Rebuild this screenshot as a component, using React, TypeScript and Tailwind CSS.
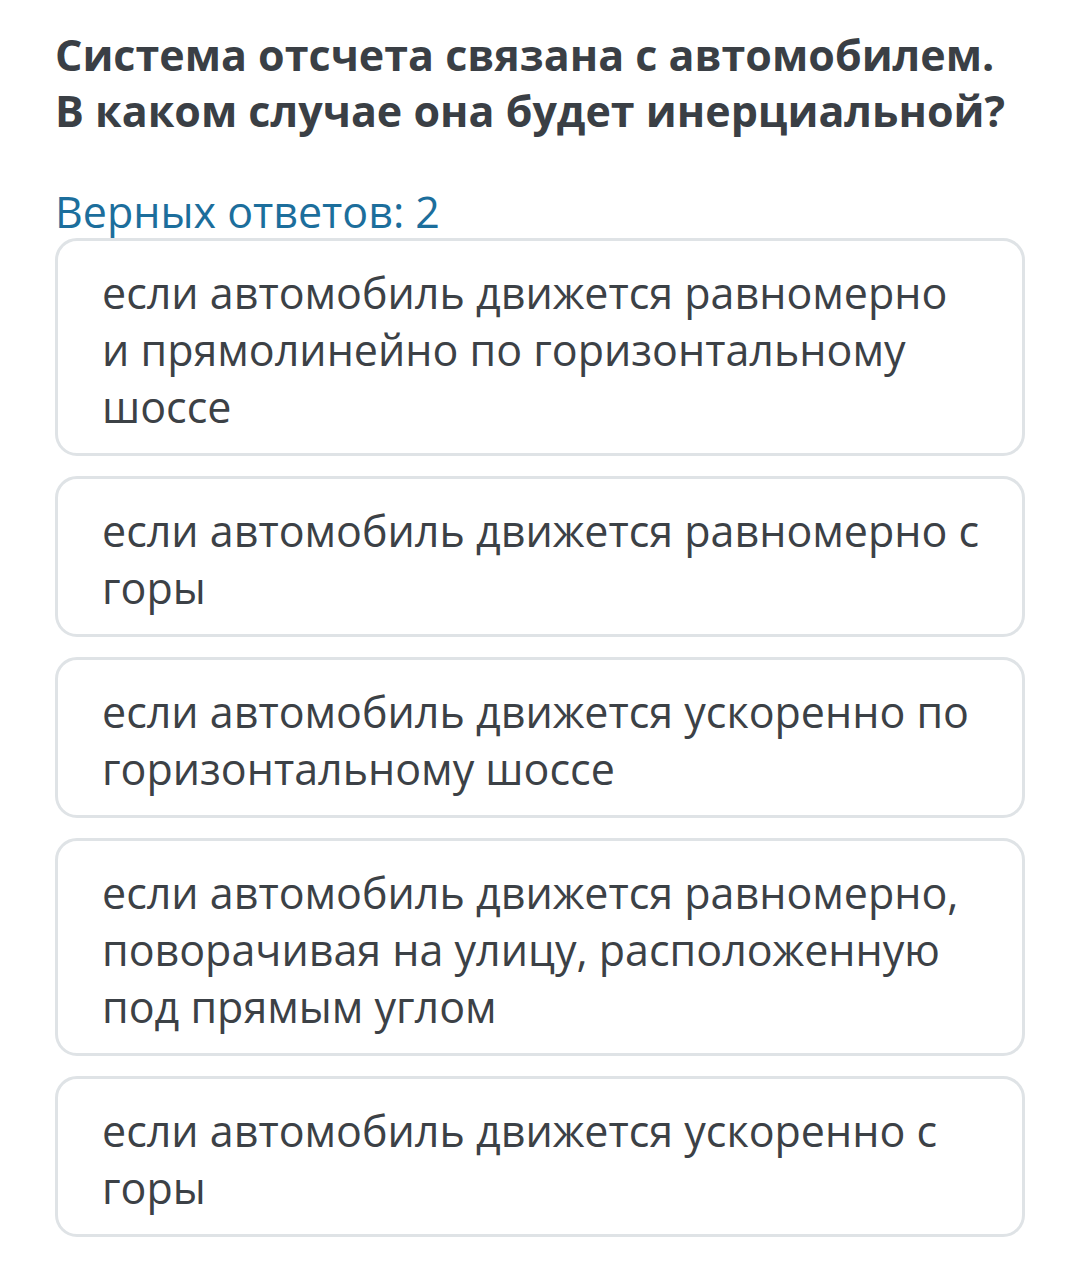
import React from "react";

const answers: string[][] = [
  [
    "если автомобиль движется равномерно",
    "и прямолинейно по горизонтальному",
    "шоссе",
  ],
  ["если автомобиль движется равномерно с", "горы"],
  ["если автомобиль движется ускоренно по", "горизонтальному шоссе"],
  [
    "если автомобиль движется равномерно,",
    "поворачивая на улицу, расположенную",
    "под прямым углом",
  ],
  ["если автомобиль движется ускоренно с", "горы"],
];

export default function App() {
  return (
    <div
      className="w-[1080px] min-h-[1267px] bg-white px-[55px] pt-[27px]"
      style={{ fontFamily: '"Open Sans", "Noto Sans", sans-serif' }}
    >
      <h1 className="text-[43px] font-bold leading-[56px] text-[#3a3f45]">
        Система отсчета связана с автомобилем.
        <br />
        В каком случае она будет инерциальной?
      </h1>
      <div className="mt-[49px] text-[43px] leading-[48px] text-[#1c6e9c]">
        Верных ответов: 2
      </div>
      <div className="mt-[2px] flex flex-col gap-[20px]">
        {answers.map((lines, i) => (
          <div
            key={i}
            className="rounded-[22px] border-[3px] border-[#dfe3e6] bg-white pl-[44px] pr-[20px] pt-[23px] pb-[18px]"
          >
            <div className="text-[43px] leading-[57px] text-[#3c4146] whitespace-nowrap">
              {lines.map((l, j) => (
                <div key={j}>{l}</div>
              ))}
            </div>
          </div>
        ))}
      </div>
    </div>
  );
}
